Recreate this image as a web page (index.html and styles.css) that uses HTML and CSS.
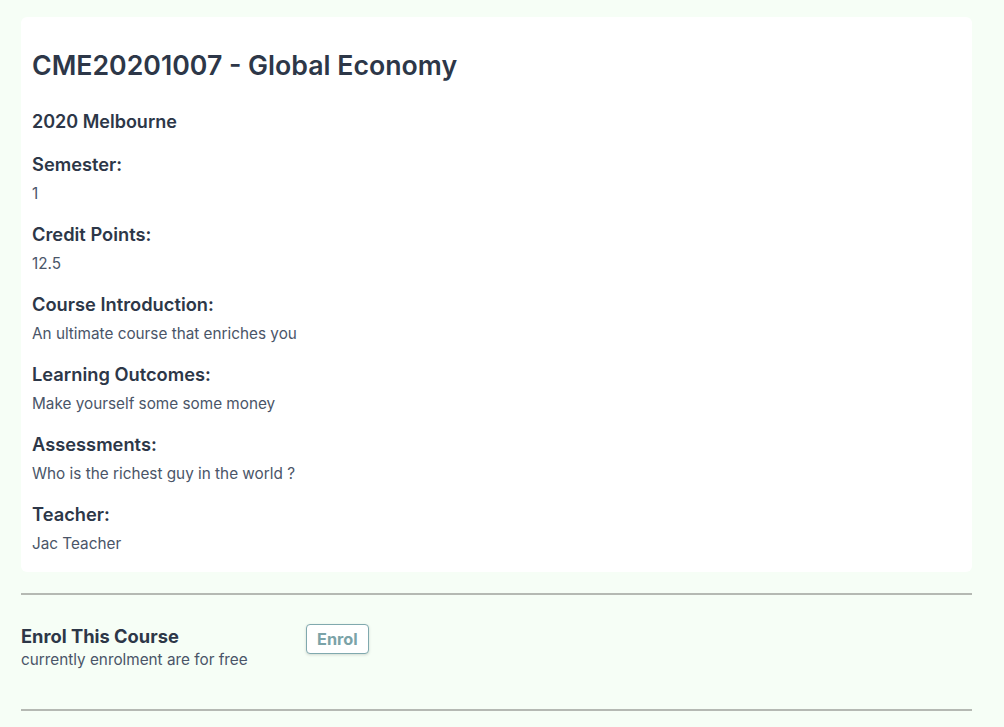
FILE: index.html
```html
<!DOCTYPE html>
<html lang="en">
<head>
<meta charset="utf-8">
<title>CME20201007 - Global Economy</title>
<link rel="stylesheet" href="styles.css">
</head>
<body>
<main class="page">
  <section class="card">
    <h1 class="title">CME20201007 - Global Economy</h1>
    <h2 class="campus">2020 Melbourne</h2>
    <dl class="details">
      <dt>Semester:</dt>
      <dd>1</dd>
      <dt>Credit Points:</dt>
      <dd>12.5</dd>
      <dt>Course Introduction:</dt>
      <dd>An ultimate course that enriches you</dd>
      <dt>Learning Outcomes:</dt>
      <dd>Make yourself some some money</dd>
      <dt>Assessments:</dt>
      <dd>Who is the richest guy in the world ?</dd>
      <dt>Teacher:</dt>
      <dd>Jac Teacher</dd>
    </dl>
  </section>
  <hr class="rule">
  <section class="enrol">
    <div class="enrol-text">
      <h3 class="enrol-title">Enrol This Course</h3>
      <p class="enrol-sub">currently enrolment are for free</p>
    </div>
    <button class="enrol-btn" type="button">Enrol</button>
  </section>
  <hr class="rule rule-end">
</main>
</body>
</html>
```
FILE: styles.css
```css
html, body {
  margin: 0;
  padding: 0;
  background: #f6fef6;
}
body {
  font-family: Inter, "Noto Sans", sans-serif;
  color: #2d3748;
}
.page {
  width: 951px;
  padding: 17px 0 0 21px;
}
.card {
  background: #ffffff;
  border-radius: 6px;
  padding: 32px 11px 16px 11px;
}
.title {
  margin: 0;
  font-size: 26.7px;
  line-height: 32px;
  font-weight: 600;
  color: #2d3748;
}
.campus {
  margin: 29px 0 0 0;
  font-size: 18px;
  line-height: 24px;
  font-weight: 600;
}
.details {
  margin: 0;
  padding-top: 2px;
}
.details dt {
  margin-top: 16px;
  font-size: 18.3px;
  line-height: 24px;
  font-weight: 600;
}
.details dd {
  margin: 6px 0 0 0;
  font-size: 15.3px;
  line-height: 24px;
  color: #4a5568;
}
.rule {
  margin: 21px 0 0 0;
  border: 0;
  height: 2px;
  background: #b5b9b3;
}
.rule-end {
  margin-top: 0;
}
.enrol {
  display: flex;
  align-items: flex-start;
  padding: 27px 0 37px 0;
}
.enrol-text {
  width: 285px;
  padding-top: 2px;
}
.enrol-title {
  margin: 0;
  font-size: 18.3px;
  line-height: 24px;
  font-weight: 700;
}
.enrol-sub {
  margin: 0;
  font-size: 15.3px;
  line-height: 24px;
  color: #4a5568;
}
.enrol-btn {
  margin-top: 2px;
  height: 30px;
  padding: 0 10px;
  font-family: inherit;
  font-size: 16.3px;
  font-weight: 700;
  color: #7ba3a8;
  background: #ffffff;
  border: 1px solid #80a9ae;
  border-radius: 4px;
  box-shadow: 0 1px 3px rgba(0,0,0,0.15);
}
```
